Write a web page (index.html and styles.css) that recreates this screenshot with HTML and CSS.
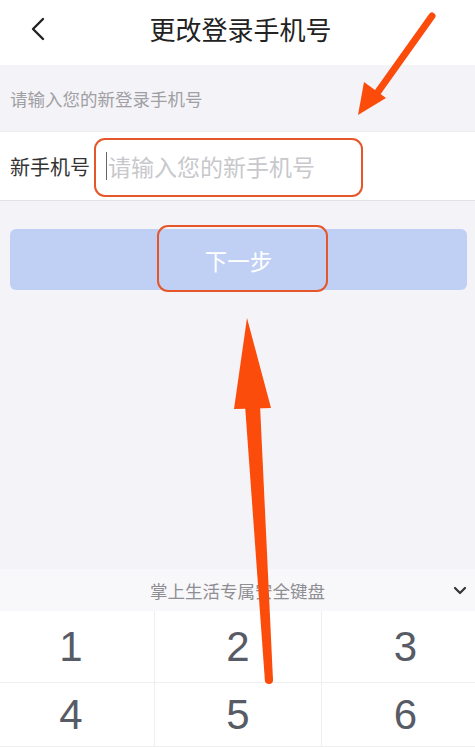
FILE: index.html
```html
<!DOCTYPE html>
<html lang="zh">
<head>
<meta charset="utf-8">
<link rel="stylesheet" href="styles.css">
</head>
<body>
<div class="page">
  <header class="topbar">
    <svg class="back" viewBox="0 0 16 24" width="16" height="24"><path d="M13 2 L3 12 L13 22" fill="none" stroke="#222" stroke-width="2.4" stroke-linecap="round" stroke-linejoin="round"/></svg>
    <h1 class="title">更改登录手机号</h1>
  </header>
  <div class="hint">请输入您的新登录手机号</div>
  <div class="row">
    <span class="label">新手机号</span>
    <div class="field"><span class="cursor"></span><span class="placeholder">请输入您的新手机号</span></div>
  </div>
  <div class="btnwrap">
    <div class="btn">下一步</div>
  </div>
  <div class="spacer"></div>
  <div class="kbhead">
    <span class="kbtitle">掌上生活专属安全键盘</span>
    <svg class="kbclose" viewBox="0 0 14 10" width="14" height="10"><path d="M2 2 L7 7 L12 2" fill="none" stroke="#333" stroke-width="2.2" stroke-linecap="round" stroke-linejoin="round"/></svg>
  </div>
  <div class="keyclip">
    <div class="keys">
      <div class="key">1</div><div class="key">2</div><div class="key">3</div>
      <div class="key">4</div><div class="key">5</div><div class="key">6</div>
    </div>
  </div>
  <div class="mark mark-field"></div>
  <div class="mark mark-btn"></div>
  <svg class="arrows" viewBox="0 0 475 747" width="475" height="747">
    <line x1="432" y1="16" x2="375" y2="96" stroke="#fc4c0c" stroke-width="7" stroke-linecap="round"/>
    <polygon points="358,115 364,82 386,98" fill="#fc4c0c"/>
    <polygon points="247,318 271,408 234,409" fill="#fc4c0c"/>
    <polygon points="245,405 260,405 273,680 265,682" fill="#fc4c0c"/>
    <circle cx="269" cy="680" r="4" fill="#fc4c0c"/>
  </svg>
</div>
</body>
</html>
```
FILE: styles.css
```css
* { box-sizing: border-box; margin: 0; padding: 0; }
html, body { width: 475px; height: 747px; overflow: hidden; }
body {
  background: #f4f3f7;
  font-family: "Noto Sans CJK SC", "Noto Sans", sans-serif;
}
.page { position: relative; width: 475px; height: 747px; display: flex; flex-direction: column; }
.topbar {
  height: 65px;
  background: #fff;
  display: flex;
  align-items: center;
  justify-content: center;
  position: relative;
}
.back { position: absolute; left: 30px; top: 17px; }
.title { font-size: 26px; font-weight: 400; color: #222; margin-top: -9px; margin-left: 6px; }
.hint {
  height: 67px;
  padding-left: 10px;
  display: flex;
  align-items: center;
  font-size: 17.5px;
  color: #9f9fa4;
  border-bottom: 1px solid #ececef;
}
.row {
  height: 69px;
  background: #fff;
  display: flex;
  align-items: center;
  padding-left: 10px;
  border-bottom: 1px solid #e4e4e7;
}
.label { font-size: 20px; color: #333; width: 96px; }
.field { display: flex; align-items: center; }
.cursor { width: 1px; height: 28px; background: #666; margin-right: 1px; }
.placeholder { font-size: 23px; color: #c8c8cc; }
.btnwrap { padding: 28px 8px 0 10px; }
.btn {
  height: 61px;
  background: #bfd0f4;
  border-radius: 6px;
  color: #fff;
  font-size: 22.5px;
  display: flex;
  align-items: center;
  justify-content: center;
}
.spacer { flex: 1; }
.kbhead {
  height: 42px;
  background: #f8f8fa;
  display: flex;
  align-items: center;
  justify-content: center;
  position: relative;
}
.kbtitle { font-size: 17.5px; color: #8e8e93; }
.kbclose { position: absolute; right: 8px; top: 17px; }
.keyclip { overflow: hidden; background: #fff; }
.keys {
  margin-left: -12px;
  width: 501px;
  display: grid;
  grid-template-columns: 167px 167px 167px;
  grid-template-rows: 72px 64px;
}
.key {
  display: flex;
  align-items: center;
  justify-content: center;
  font-family: "Liberation Sans", Arial, sans-serif;
  font-size: 42px;
  color: #575b66;
  border-right: 1px solid #efefef;
  border-bottom: 1px solid #efefef;
}
.key:nth-child(3n) { border-right: none; }
.mark {
  position: absolute;
  border: 2.5px solid #e5572b;
  border-radius: 11px;
}
.mark-field { left: 94px; top: 138px; width: 269px; height: 59px; }
.mark-btn { left: 157px; top: 225px; width: 171px; height: 67px; }
.arrows { position: absolute; left: 0; top: 0; pointer-events: none; }
```
